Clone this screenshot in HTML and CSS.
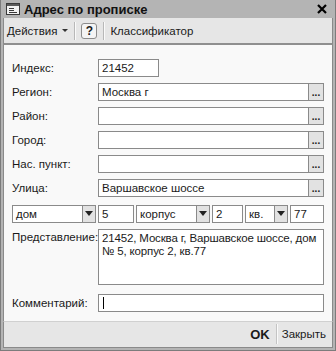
FILE: index.html
```html
<!DOCTYPE html>
<html lang="ru">
<head>
    <meta charset="UTF-8">
    <title>Адрес по прописке</title>
    <link rel="stylesheet" href="styles.css">
</head>
<body>

<div class="window">
    <div class="titlebar">
        <svg class="title-icon" width="14" height="12" viewBox="0 0 14 12">
            <rect x="0.5" y="0.5" width="13" height="11" fill="#f2f2f2" stroke="#3a3a3a"/>
            <rect x="1" y="1" width="12" height="2" fill="#5a5a5a"/>
            <line x1="3" y1="5.5" x2="8" y2="5.5" stroke="#3a3a3a"/>
            <line x1="3" y1="7.5" x2="8" y2="7.5" stroke="#3a3a3a"/>
            <line x1="3" y1="9.5" x2="11" y2="9.5" stroke="#3a3a3a"/>
        </svg>
        <span class="title">Адрес по прописке</span>
        <svg class="close" width="10" height="10" viewBox="0 0 10 10">
            <path d="M1 1 L9 9 M9 1 L1 9" stroke="#000" stroke-width="2.2"/>
        </svg>
    </div>

    <div class="toolbar">
        <span class="tb-item">Действия<span class="caret"></span></span>
        <span class="tb-sep"></span>
        <span class="help-btn">?</span>
        <span class="tb-sep"></span>
        <span class="tb-item">Классификатор</span>
    </div>

    <div class="content">
        <div class="row">
            <span class="label">Индекс:</span>
            <div class="field short">21452</div>
        </div>
        <div class="row">
            <span class="label">Регион:</span>
            <div class="field combo"><span class="val">Москва г</span><span class="pick">...</span></div>
        </div>
        <div class="row">
            <span class="label">Район:</span>
            <div class="field combo"><span class="val"></span><span class="pick">...</span></div>
        </div>
        <div class="row">
            <span class="label">Город:</span>
            <div class="field combo"><span class="val"></span><span class="pick">...</span></div>
        </div>
        <div class="row">
            <span class="label">Нас. пункт:</span>
            <div class="field combo"><span class="val"></span><span class="pick">...</span></div>
        </div>
        <div class="row">
            <span class="label">Улица:</span>
            <div class="field combo"><span class="val">Варшавское шоссе</span><span class="pick">...</span></div>
        </div>

        <div class="row house">
            <div class="field select w-dom"><span class="val">дом</span><span class="drop"></span></div>
            <div class="field w-num1">5</div>
            <div class="field select w-korp"><span class="val">корпус</span><span class="drop"></span></div>
            <div class="field w-num2">2</div>
            <div class="field select w-kv"><span class="val">кв.</span><span class="drop"></span></div>
            <div class="field w-num3">77</div>
        </div>

        <div class="row multi">
            <span class="label">Представление:</span>
            <div class="field area">21452, Москва г, Варшавское шоссе, дом № 5, корпус 2, кв.77</div>
        </div>

        <div class="row comment">
            <span class="label">Комментарий:</span>
            <div class="field"><span class="cursor"></span></div>
        </div>
    </div>

    <div class="footer">
        <span class="ok">OK</span>
        <span class="ft-sep"></span>
        <span class="close-btn">Закрыть</span>
    </div>
</div>

</body>
</html>
```

FILE: styles.css
```css
body {
    margin: 0;
    padding: 0;
    font-family: 'Liberation Sans', Arial, sans-serif;
    font-size: 11.5px;
    color: #1a1a1a;
    background-color: #ffffff;
}
.window {
    width: 336px;
    height: 351px;
    box-sizing: border-box;
    display: flex;
    flex-direction: column;
    background-color: #b4b4b4;
    border: 1px solid #7c7c7c;
    border-top: none;
    padding: 0 2px 2px 2px;
}
.titlebar {
    height: 19px;
    display: flex;
    align-items: center;
    margin: 0 -2px;
    padding: 0 8px 0 5px;
}
.title-icon {
    margin-right: 4px;
}
.title {
    flex-grow: 1;
    font-weight: bold;
    font-size: 13px;
    color: #111;
}
.toolbar {
    height: 25px;
    display: flex;
    align-items: center;
    background-color: #e6e6e6;
    border-left: 1px solid #8a8a8a;
    border-right: 1px solid #8a8a8a;
    border-bottom: 2px solid #8f8f8f;
    padding-left: 3px;
}
.tb-item {
    display: flex;
    align-items: center;
}
.caret {
    display: inline-block;
    width: 0;
    height: 0;
    margin-left: 5px;
    border-left: 3px solid transparent;
    border-right: 3px solid transparent;
    border-top: 3px solid #333;
}
.tb-sep {
    width: 1px;
    height: 18px;
    background-color: #b8b8b8;
    border-right: 1px solid #fafafa;
    margin: 0 5px 0 6px;
}
.help-btn {
    width: 16px;
    height: 16px;
    box-sizing: border-box;
    border: 1px solid #8c8c8c;
    border-radius: 3px;
    background-color: #f4f4f4;
    font-weight: bold;
    font-size: 12px;
    text-align: center;
    line-height: 14px;
}
.content {
    flex-grow: 1;
    background-color: #f9f9f9;
    border-left: 1px solid #8a8a8a;
    border-right: 1px solid #8a8a8a;
    padding: 14px 8px 9px 8px;
    display: flex;
    flex-direction: column;
}
.row {
    display: flex;
    align-items: center;
    height: 18px;
    margin-bottom: 6px;
}
.label {
    width: 86px;
    flex-shrink: 0;
    white-space: nowrap;
}
.field {
    box-sizing: border-box;
    height: 18px;
    border: 1px solid #8a8a8a;
    background-color: #fff;
    padding-left: 3px;
    line-height: 16px;
    flex-grow: 1;
    display: flex;
}
.field.short {
    flex-grow: 0;
    width: 61px;
}
.val {
    flex-grow: 1;
}
.pick {
    width: 14px;
    flex-shrink: 0;
    border-left: 1px solid #8a8a8a;
    background-color: #e2e2e2;
    font-weight: bold;
    font-size: 10px;
    text-align: center;
    line-height: 18px;
}
.combo {
    padding-right: 0;
}
.house {
    margin-top: 2px;
    gap: 2px;
}
.select {
    flex-grow: 0;
    padding-right: 0;
}
.drop {
    width: 12px;
    flex-shrink: 0;
    border-left: 1px solid #8a8a8a;
    background-color: #e2e2e2;
    position: relative;
}
.drop::after {
    content: "";
    position: absolute;
    left: 2px;
    top: 5px;
    border-left: 4px solid transparent;
    border-right: 4px solid transparent;
    border-top: 5px solid #222;
}
.w-dom { width: 84px; }
.w-num1 { width: 36px; flex-grow: 0; }
.w-korp { width: 74px; }
.w-num2 { width: 31px; flex-grow: 0; }
.w-kv { width: 43px; }
.w-num3 { flex-grow: 1; }
.multi {
    height: 56px;
    align-items: flex-start;
    margin-bottom: 9px;
}
.multi .label {
    padding-top: 2px;
}
.area {
    height: 56px;
    display: block;
    line-height: 13px;
    padding: 2px 0 0 3px;
    letter-spacing: -0.15px;
}
.comment {
    margin-bottom: 0;
}
.cursor {
    width: 1px;
    height: 12px;
    margin: 2px 0 0 1px;
    background-color: #000;
}
.footer {
    height: 26px;
    display: flex;
    align-items: center;
    justify-content: flex-end;
    background-color: #e6e6e6;
    border: 1px solid #8a8a8a;
    border-top: 1px solid #d0d0d0;
    padding-right: 6px;
}
.ok {
    font-weight: bold;
    font-size: 13px;
}
.ft-sep {
    width: 1px;
    height: 20px;
    background-color: #c4c4c4;
    border-right: 1px solid #fafafa;
    margin: 0 4px 0 6px;
}
```
